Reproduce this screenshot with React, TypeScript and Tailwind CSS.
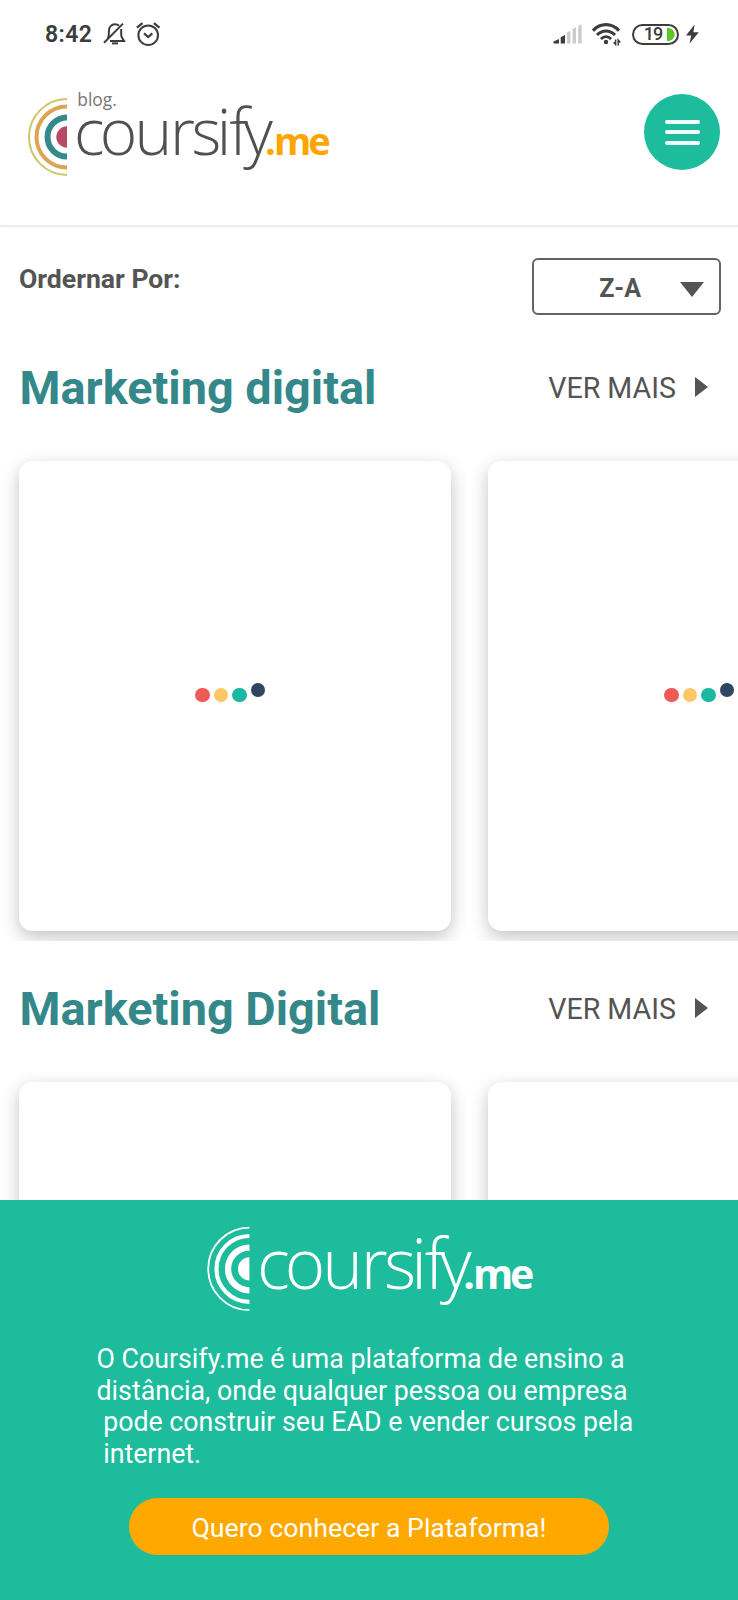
import React from "react";

function StatusBar() {
  return (
    <div className="flex h-[68px] shrink-0 items-center justify-between pl-[45px] pr-[38px] text-[#3c3c3c]">
      <div className="flex items-center">
        <span className="w-[48px] text-[23px] leading-[27px] font-semibold tracking-[0.4px] whitespace-nowrap">8:42</span>
        <svg className="ml-[10px]" width="24" height="24" viewBox="0 0 24 24" fill="none" stroke="#3c3c3c" strokeWidth="2">
          <path d="M4.8 16.6 C6 14.600 5.9 12.500 5.9 9.2 C5.9 5 8.4 2.2 12 2.2 C13.6 2.2 15 2.8 16 3.8" />
          <path d="M18.200 7 V13 C18.200 15.6 19.8 17 21 18.9 H7" />
          <path d="M1 20.8 L20 1.6" />
          <path d="M9 21.4 H15" strokeWidth="2" />
        </svg>
        <svg className="ml-[9px]" width="26" height="26" viewBox="0 0 26 26" fill="none" stroke="#3c3c3c" strokeWidth="2">
          <circle cx="12.2" cy="14.2" r="9.8" />
          <path d="M8.1 12.4 L12.2 16 L16.3 12.4" strokeWidth="2.1" />
          <path d="M0.9 6.6 L6.5 2.2 M23.5 6.6 L17.9 2.2" strokeWidth="2.3" />
        </svg>
      </div>
      <div className="flex items-center">
        <svg width="30" height="22" viewBox="0 0 30 22">
          <path d="M0.500 20.5 V18.5 L6 16 V20.5 Z M7.700 20.5 V14.2 L12 12 V20.5 Z" fill="#3c3c3c" />
          <path d="M14 20.5 V9.4 L17.4 7.8 V20.5 Z M19.6 20.5 V6 L23 4.2 V20.5 Z M25.2 20.5 V3 L28.6 1.2 V20.5 Z" fill="#cbcbcb" />
        </svg>
        <svg className="ml-[9px]" width="30" height="24" viewBox="0 0 30 24" fill="none" stroke="#3c3c3c">
          <path d="M1 8.6 C8.4 0.600 19.6 0.600 27 8.6" strokeWidth="3.2" />
          <path d="M5 13 C10.2 7.6 17.8 7.6 23 13" strokeWidth="3" />
          <path d="M8.900 17 C12 14 16 14 19.100 17" strokeWidth="2.8" />
          <circle cx="14" cy="20" r="2.200" fill="#3c3c3c" stroke="none" />
          <path d="M23.6 17.4 V22.500 L21.6 20.300 M26.200 23.4 V18 L28.300 20.4" strokeWidth="1.5" />
        </svg>
        <div className="ml-[10px] flex h-[21px] w-[47px] items-center justify-end rounded-full border-2 border-[#3c3c3c] pr-[2.5px]">
          <span className="mr-[4px] text-[18px] leading-[18px] font-medium tracking-[-0.8px]">19</span>
          <svg width="8" height="13" viewBox="0 0 8 13">
            <path d="M0 0 H2 C5.4 0.8 7.6 3.4 7.6 6.5 C7.6 9.6 5.4 12.2 2 13 H0 Z" fill="#5ac725" />
          </svg>
        </div>
        <svg className="ml-[6px]" width="15" height="20" viewBox="0 0 15 20">
          <path d="M9.6 0.4 L1 11.6 H6.2 L4.6 19.6 L13.8 8.2 H8.4 Z" fill="#3c3c3c" />
        </svg>
      </div>
    </div>
  );
}

function Wordmark({ nameClass, suffixClass }: { nameClass: string; suffixClass: string }) {
  return (
    <text y="155.2" className="font-['Open_Sans',sans-serif]">
      <tspan x="74 99.8 134.5 170 191.5 216.8 229.3 243.5" className={nameClass}>coursify</tspan>
      <tspan x="265 274 308.2" className={suffixClass}>.me</tspan>
    </text>
  );
}

function HeaderLogo() {
  return (
    <svg className="overflow-visible" width="310" height="92" viewBox="24 88 310 92" fill="none">
      <path d="M67 99 A38 38 0 0 0 67 175" stroke="#cfc56a" strokeWidth="2" />
      <path d="M67 106.5 A30.5 30.5 0 0 0 67 167.5" stroke="#dfa452" strokeWidth="4" />
      <path d="M67 117.5 A19.5 19.5 0 0 0 67 156.5" stroke="#35898b" strokeWidth="6" />
      <path d="M67 126.3 A10.7 10.7 0 0 0 67 147.7 Z" fill="#b84a66" />
      <text x="77.3" y="106" textLength="39.5" lengthAdjust="spacingAndGlyphs" fill="#777777" className="font-['Open_Sans',sans-serif] text-[18px]">blog.</text>
      <Wordmark nameClass="fill-[#505050] text-[64px] font-light" suffixClass="fill-[#ffa500] text-[38px] font-bold" />
    </svg>
  );
}

function FooterLogo() {
  return (
    <svg className="ml-[2px] overflow-visible" width="334.8" height="99.36" viewBox="24 88 310 92" fill="none">
      <path d="M67 98.8 A38.2 38.2 0 0 0 67 175.2" stroke="#fff" strokeWidth="1.7" />
      <path d="M67 106.5 A30.5 30.5 0 0 0 67 167.5" stroke="#fff" strokeWidth="3.8" />
      <path d="M67 117.2 A19.8 19.8 0 0 0 67 156.8" stroke="#fff" strokeWidth="5.8" />
      <path d="M67 126.3 A10.7 10.7 0 0 0 67 147.7 Z" fill="#fff" />
      <Wordmark nameClass="fill-white text-[64px] font-light" suffixClass="fill-white text-[38px] font-bold" />
    </svg>
  );
}

function Loader() {
  return (
    <div className="flex gap-[4px] pr-[9.5px] pb-[2px]">
      <span className="size-[14.6px] rounded-full bg-[#ee5a56]" />
      <span className="size-[14.6px] rounded-full bg-[#fdc766]" />
      <span className="size-[14.6px] rounded-full bg-[#1ab8a2]" />
      <span className="size-[14.6px] -translate-y-[5px] rounded-full bg-[#2f4660]" />
    </div>
  );
}

function Card() {
  return (
    <div className="flex h-[470px] w-[432px] shrink-0 items-center justify-center rounded-[14px] bg-white shadow-[0_6px_18px_rgba(0,0,0,0.24)]">
      <Loader />
    </div>
  );
}

function CourseRow({ title }: { title: string }) {
  return (
    <section>
      <div className="flex h-[58px] items-center justify-between pr-[30px] pl-[19.5px]">
        <h2 className="text-[46.8px] leading-[58px] font-bold whitespace-nowrap text-[#35888a]">{title}</h2>
        <div className="flex items-center gap-[19px] text-[#545454]">
          <span className="text-[28.6px] leading-[32px] whitespace-nowrap">VER MAIS</span>
          <svg className="-mt-[3px]" width="13" height="20" viewBox="0 0 13 20"><path d="M0 0 L13 10 L0 20 Z" fill="#545454" /></svg>
        </div>
      </div>
      <div className="mt-[34px] flex h-[490px] gap-[37px] overflow-hidden pt-[10px] pl-[19px]">
        <Card />
        <Card />
      </div>
    </section>
  );
}

export default function App() {
  return (
    <div className="flex h-[1600px] w-[738px] flex-col overflow-hidden bg-white font-['Roboto',sans-serif]">
      <StatusBar />
      <header className="flex h-[159px] shrink-0 items-start justify-between border-b-2 border-[#ededed] pt-[20px] pr-[18px] pl-[24px] shadow-[0_1px_2px_rgba(0,0,0,0.03)]">
        <HeaderLogo />
        <button className="mt-[6px] flex size-[76px] flex-col items-center justify-center gap-[6.5px] rounded-full bg-[#1cbc9c]">
          <span className="h-[4px] w-[35px] rounded-full bg-[#f2fffc]" />
          <span className="h-[4px] w-[35px] rounded-full bg-[#f2fffc]" />
          <span className="h-[4px] w-[35px] rounded-full bg-[#f2fffc]" />
        </button>
      </header>
      <main className="h-[973px] shrink-0 overflow-hidden">
        <div className="flex h-[132px] items-start justify-between pt-[31px] pr-[17px] pl-[19px] text-[#545454]">
          <span className="mt-[6px] text-[26.6px] leading-[30px] font-bold whitespace-nowrap">Ordernar Por:</span>
          <button className="flex h-[57px] w-[189px] items-center justify-end rounded-[6px] border-2 border-[#636363] pr-[15px]">
            <span className="mt-[4px] mr-[39px] text-[25px] leading-[30px] font-bold">Z-A</span>
            <svg className="mt-[5px]" width="24" height="15" viewBox="0 0 24 15"><path d="M0 0 H24 L12 15 Z" fill="#545454" /></svg>
          </button>
        </div>
        <CourseRow title="Marketing digital" />
        <div className="h-[39px]" />
        <CourseRow title="Marketing Digital" />
      </main>
      <footer className="flex h-[400px] shrink-0 flex-col items-center bg-[#1cbc9c] pt-[16px] text-white">
        <FooterLogo />
        <p className="mt-[29px] w-[545px] text-[26.75px] leading-[31.5px] whitespace-pre">{"O Coursify.me é uma plataforma de ensino a\ndistância, onde qualquer pessoa ou empresa\n pode construir seu EAD e vender cursos pela\n internet."}</p>
        <button className="mt-[27.5px] h-[57px] w-[480px] rounded-full bg-[#ffa800] pt-[3px] text-[26.7px] leading-[54px] text-white">Quero conhecer a Plataforma!</button>
      </footer>
    </div>
  );
}
